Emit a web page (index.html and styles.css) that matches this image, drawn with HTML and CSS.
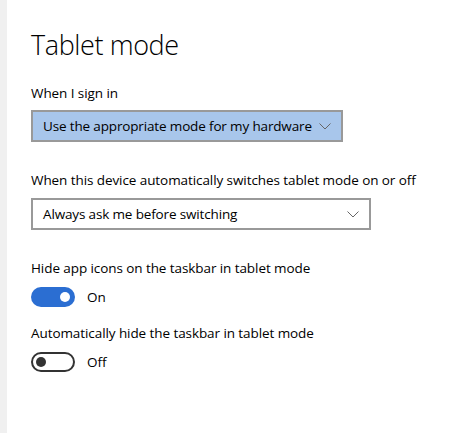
FILE: index.html
```html
<!DOCTYPE html>
<html>
<head>
<meta charset="utf-8">
<link rel="stylesheet" href="styles.css">
</head>
<body>
<div class="window">
  <div class="rail"></div>
  <main class="content">
    <h1 class="title">Tablet mode</h1>

    <div class="label first">When I sign in</div>
    <div class="select focused w1">
      <span class="select-text">Use the appropriate mode for my hardware</span>
      <svg class="chev" width="12" height="7" viewBox="0 0 12 7"><path d="M0.5 0.5 L6 6 L11.5 0.5" fill="none" stroke="#666" stroke-width="1"/></svg>
    </div>

    <div class="label second">When this device automatically switches tablet mode on or off</div>
    <div class="select w2 lower">
      <span class="select-text">Always ask me before switching</span>
      <svg class="chev" width="12" height="7" viewBox="0 0 12 7"><path d="M0.5 0.5 L6 6 L11.5 0.5" fill="none" stroke="#666" stroke-width="1"/></svg>
    </div>

    <div class="label third">Hide app icons on the taskbar in tablet mode</div>
    <div class="toggle-row">
      <span class="toggle on"><span class="knob"></span></span>
      <span class="toggle-text">On</span>
    </div>

    <div class="label fourth">Automatically hide the taskbar in tablet mode</div>
    <div class="toggle-row">
      <span class="toggle off"><span class="knob"></span></span>
      <span class="toggle-text">Off</span>
    </div>
  </main>
</div>
</body>
</html>
```
FILE: styles.css
```css
html, body {
  margin: 0;
  padding: 0;
  background: #ffffff;
}
body {
  font-family: "Open Sans", "Noto Sans", sans-serif;
  color: #000;
}
.window {
  display: flex;
  width: 469px;
  height: 433px;
  overflow: hidden;
}
.rail {
  width: 7px;
  flex: none;
  background: #f0f0f0;
}
.content {
  flex: 1;
  padding-left: 24px;
  padding-top: 0;
}
.title {
  margin: 26px 0 0 0;
  font-size: 27px;
  font-weight: 300;
  line-height: 38px;
  letter-spacing: -0.4px;
  white-space: nowrap;
}
.label {
  font-size: 13.5px;
  line-height: 20px;
  letter-spacing: -0.08px;
  white-space: nowrap;
}
.label.first { margin-top: 19px; }
.label.second { margin-top: 28px; }
.label.third { margin-top: 28px; }
.label.fourth { margin-top: 16px; }
.select {
  margin-top: 7px;
  box-sizing: border-box;
  height: 32px;
  border: 2px solid #999;
  background: #fff;
  display: flex;
  align-items: center;
  padding: 0 10px 0 10px;
}
.select.lower { margin-top: 8px; }
.select.focused {
  background: #a8c6eb;
}
.w1 { width: 312px; }
.w2 { width: 340px; }
.select-text {
  flex: 1;
  font-size: 13.5px;
  letter-spacing: -0.15px;
  white-space: nowrap;
}
.chev {
  flex: none;
}
.toggle-row {
  margin-top: 9px;
  display: flex;
  align-items: center;
  height: 20px;
}
.toggle {
  box-sizing: border-box;
  width: 44px;
  height: 20px;
  border-radius: 10px;
  display: flex;
  align-items: center;
  flex: none;
}
.toggle.on {
  background: #2b6ed2;
  justify-content: flex-end;
  padding-right: 5px;
}
.toggle.on .knob {
  width: 10px;
  height: 10px;
  border-radius: 50%;
  background: #fff;
}
.toggle.off {
  border: 2px solid #333;
  padding-left: 3px;
}
.toggle.off .knob {
  width: 10px;
  height: 10px;
  border-radius: 50%;
  background: #333;
}
.toggle-text {
  margin-left: 12px;
  font-size: 13.5px;
}
```
